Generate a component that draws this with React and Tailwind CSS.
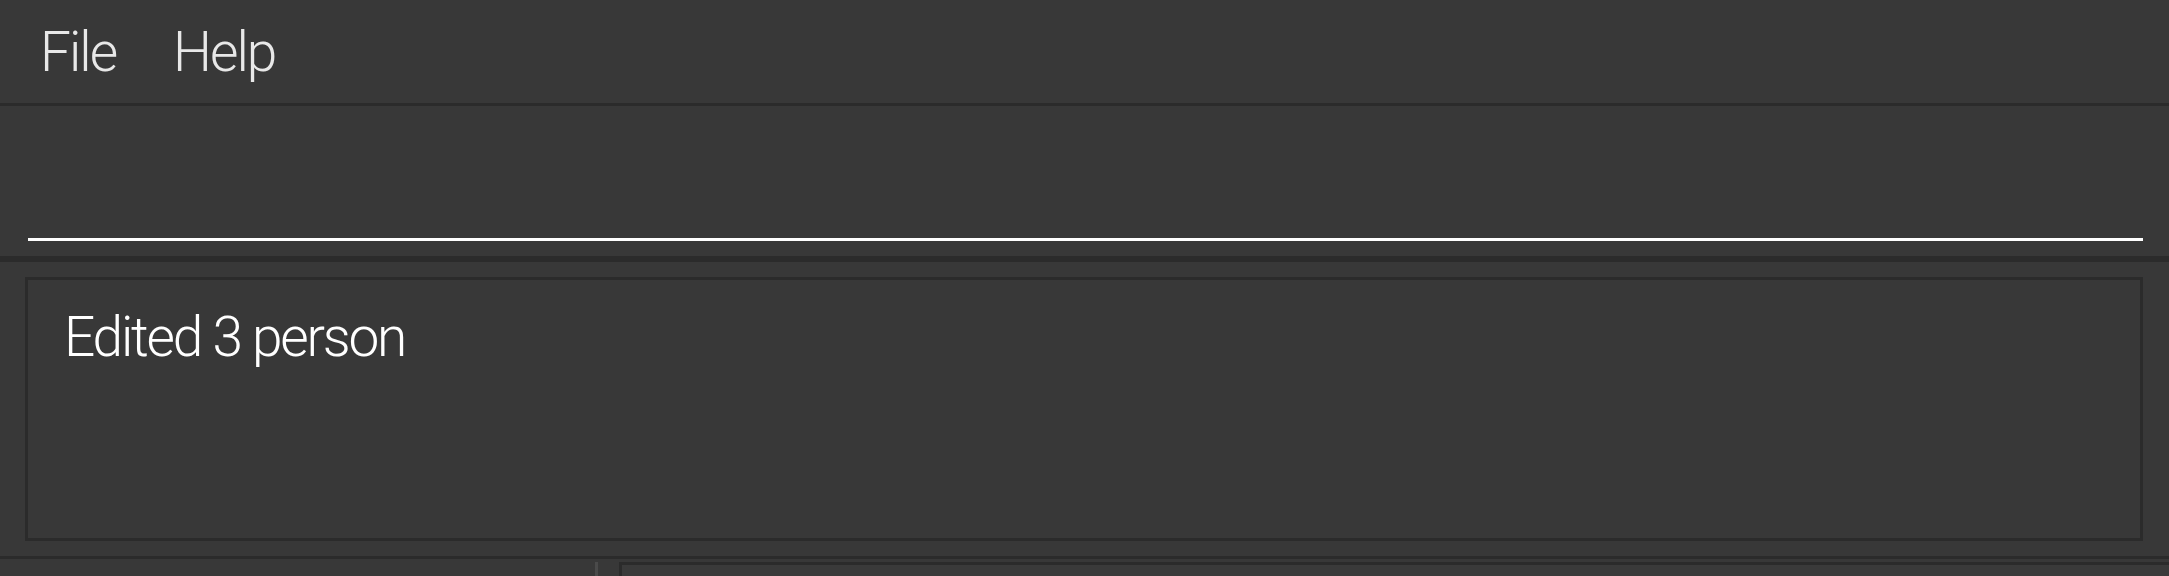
export default function App() {
  const font = { fontFamily: '"Roboto", "Open Sans", sans-serif' };

  return (
    <div className="flex h-[576px] w-full flex-col overflow-hidden bg-[#383838]" style={font}>
      {/* menu bar */}
      <div className="flex h-[106px] shrink-0 items-center border-b-[3px] border-[#2b2b2b] pl-[40px] pt-[2px] text-[55px] font-light leading-none tracking-[-2px] text-[#e8e8e8]">
        <span className="w-[133px]">File</span>
        <span>Help</span>
      </div>

      {/* command box */}
      <div className="flex h-[150px] shrink-0 items-end px-[28px] pb-[15px] pr-[26px]">
        <div className="h-[60px] w-full border-b-[3px] border-white" />
      </div>

      <div className="h-[6px] shrink-0 bg-[#2b2b2b]" />

      {/* result display */}
      <div className="shrink-0 pb-[15px] pl-[25px] pr-[26px] pt-[15px]">
        <div className="h-[264px] border-[3px] border-[#2b2b2b] pl-[36px] pt-[30px] text-[55px] font-light leading-none tracking-[-2.2px] text-white">
          Edited 3 person
        </div>
      </div>

      <div className="h-[3px] shrink-0 bg-[#2b2b2b]" />

      {/* list panels */}
      <div className="flex flex-1 pt-[3px]">
        <div className="w-[595px] shrink-0" />
        <div className="w-[3px] shrink-0 bg-[#4a4a4a]" />
        <div className="w-[21px] shrink-0" />
        <div className="flex-1 border-l-[3px] border-t-[3px] border-[#2b2b2b] bg-[#3a3a3a]" />
      </div>
    </div>
  );
}
